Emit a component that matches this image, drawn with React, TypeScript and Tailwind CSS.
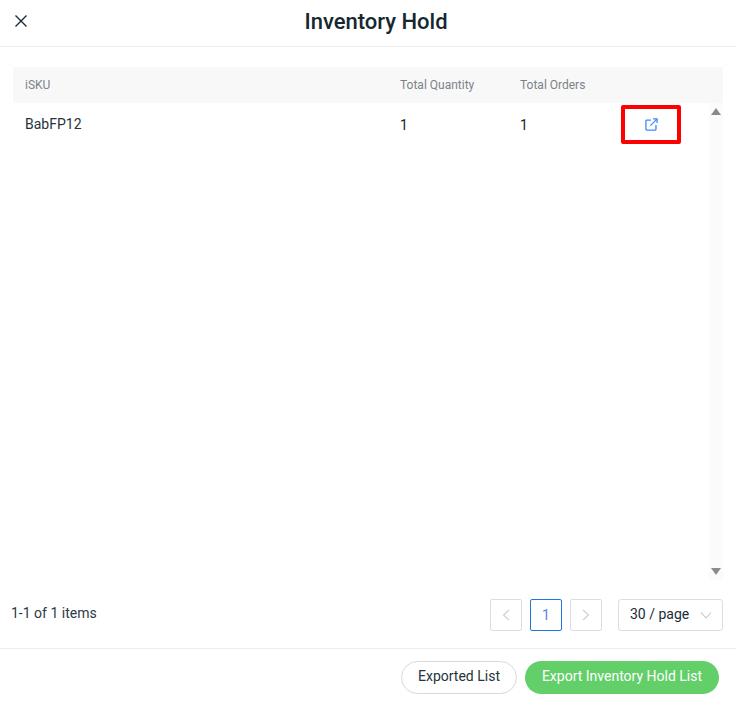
import React from "react";

function Ext() {
  return (
    <svg width="13" height="13" viewBox="0 0 14 14" fill="none" stroke="#3f8ef5" strokeWidth="1.4">
      <path d="M6.5 2.2H2a1 1 0 0 0-1 1V12a1 1 0 0 0 1 1h8.8a1 1 0 0 0 1-1V7.5" />
      <path d="M5.8 8.2 12.8 1.2M8.6 1h4.4v4.4" />
    </svg>
  );
}

export default function App() {
  return (
    <div className="w-[736px] h-[709px] bg-white flex flex-col overflow-hidden font-['Roboto',sans-serif]">
      <header className="h-[47px] shrink-0 border-b border-[#ececec] flex items-center relative justify-center pb-[3px] pl-[16px]">
        <svg className="absolute left-[15px] top-[15px]" width="12" height="12" viewBox="0 0 12 12" fill="none" stroke="#1d2a33" strokeWidth="1.4">
          <path d="M0.5 0.5l11 11M11.5 0.5l-11 11" />
        </svg>
        <h1 className="text-[22px] leading-[28px] font-medium text-[#15272f]">Inventory Hold</h1>
      </header>

      <main className="flex-1 flex flex-col pl-[13px] pr-[13px] pt-[20px]">
        <div className="h-[36px] shrink-0 bg-[#f8f8f8] flex items-center text-[12px] text-[#7b8389]">
          <div className="w-[387px] pl-[12px]">iSKU</div>
          <div className="w-[120px]">Total Quantity</div>
          <div>Total Orders</div>
        </div>
        <div className="h-[477px] shrink-0 flex relative">
          <div className="flex-1 flex items-start h-[42px] text-[14px] text-[#27333b]">
            <div className="w-[387px] pl-[12px] pt-[12px] leading-[18px]">BabFP12</div>
            <div className="w-[120px] pt-[13px] leading-[18px] text-[#1b1b1b]">1</div>
            <div className="w-[101px] pt-[13px] leading-[18px] text-[#1b1b1b]">1</div>
            <div className="relative w-[60px] h-[39px] mt-[2px] border-[4px] border-[#fe0000] rounded-[2px] flex items-center justify-center">
              <span className="-mt-[1px] ml-[1px]"><Ext /></span>
            </div>
          </div>
          <div className="w-[14px] bg-[#fbfbfb] flex flex-col items-center justify-between py-[5px]">
            <div className="w-0 h-0 border-x-[5px] border-x-transparent border-b-[7px] border-b-[#8a8a8a]" />
            <div className="w-0 h-0 border-x-[5px] border-x-transparent border-t-[7px] border-t-[#8a8a8a]" />
          </div>
        </div>

        <div className="flex-1 flex items-start pt-[19px] -ml-[2px]">
          <span className="text-[14px] leading-[28px] text-[#2d3a42] mr-auto">1-1 of 1 items</span>
          <div className="flex items-center">
            <div className="w-[32px] h-[32px] border border-[#dddddd] rounded-[2px] flex items-center justify-center">
              <svg width="10" height="12" viewBox="0 0 10 12" fill="none" stroke="#d0d0d0" strokeWidth="1.2"><path d="M8 1 2.5 6 8 11" /></svg>
            </div>
            <div className="w-[32px] h-[32px] ml-[8px] border border-[#1f76dc] rounded-[2px] flex items-center justify-center text-[14px] text-[#5a86e0]">1</div>
            <div className="w-[32px] h-[32px] ml-[8px] border border-[#dddddd] rounded-[2px] flex items-center justify-center">
              <svg width="10" height="12" viewBox="0 0 10 12" fill="none" stroke="#d0d0d0" strokeWidth="1.2"><path d="M2 1l5.5 5L2 11" /></svg>
            </div>
            <div className="w-[105px] h-[32px] ml-[16px] border border-[#dddddd] rounded-[3px] flex items-center justify-between pl-[11px] pr-[10px] text-[14px] text-[#1c2b36]">
              <span className="-mt-[2px]">30 / page</span>
              <svg width="12" height="8" viewBox="0 0 12 8" fill="none" stroke="#c4c4c4" strokeWidth="1.1"><path d="M1 1.5 6 7l5-5.5" /></svg>
            </div>
          </div>
        </div>
      </main>

      <footer className="h-[61px] shrink-0 border-t border-[#ececec] flex items-start justify-end gap-[8px] pt-[12px] pr-[17px]">
        <button className="h-[33px] w-[116px] rounded-full border border-[#d9d9d9] bg-white text-[14px] leading-[29px] pb-[2px] text-[#27333b]">Exported List</button>
        <button className="h-[33px] w-[194px] rounded-full bg-[#62cf68] text-[14px] leading-[29px] pb-[2px] text-white">Export Inventory Hold List</button>
      </footer>
    </div>
  );
}
